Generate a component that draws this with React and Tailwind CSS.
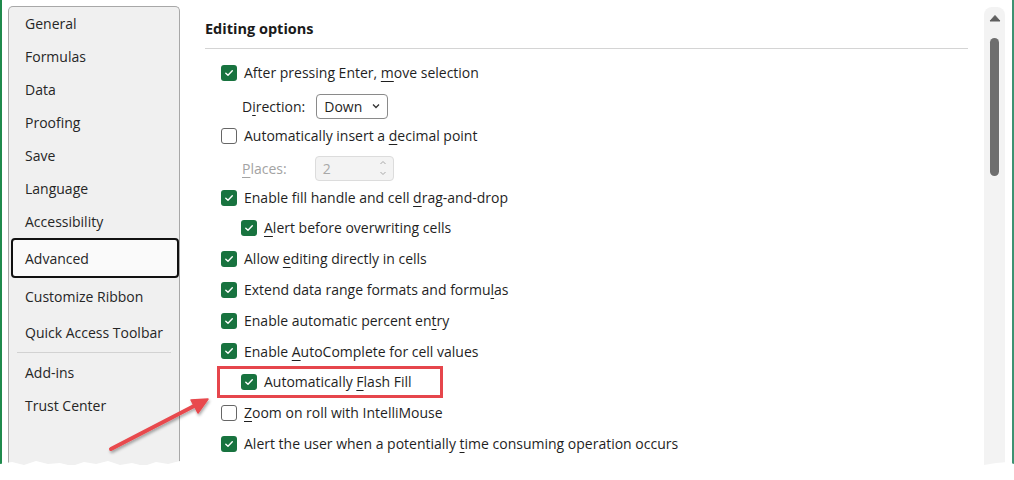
import React from "react";

const font = { fontFamily: '"Open Sans", "Noto Sans", sans-serif' };

function Check({ checked }) {
  if (checked) {
    return (
      <span className="w-[16px] h-[16px] rounded-[3px] bg-[#18733f] flex items-center justify-center shrink-0">
        <svg width="10" height="10" viewBox="0 0 10 10">
          <path d="M1.8 5.2 L4 7.3 L8.3 2.8" fill="none" stroke="white" strokeWidth="1.4" strokeLinecap="round" strokeLinejoin="round" />
        </svg>
      </span>
    );
  }
  return <span className="w-[16px] h-[16px] rounded-[3px] border border-[#666666] bg-white shrink-0" />;
}

function Row({ h, checked, sub, children, highlight }) {
  return (
    <div className={`relative flex items-center ${h} ${sub ? "pl-[36px]" : "pl-[16px]"} gap-[7px]`}>
      {highlight && (
        <div className="absolute left-[12px] top-0 w-[226px] h-[32px] border-[3px] border-[#e6464c]" />
      )}
      <Check checked={checked} />
      <span className="text-[14px] text-[#1f1f1f] whitespace-nowrap">{children}</span>
    </div>
  );
}

const U = ({ children }) => <u className="underline underline-offset-[3px] decoration-1">{children}</u>;

function NavItem({ children, h = "h-[33px]" }) {
  return (
    <div className={`${h} flex items-center pl-[16px] text-[14px] text-[#262626]`}>{children}</div>
  );
}

export default function App() {
  return (
    <div className="relative w-[1014px] h-[480px] bg-white overflow-hidden" style={font}>
      <div className="flex h-[465px]">
        <div className="w-[2px] bg-[#1f8a4c] shrink-0" />
        {/* nav */}
        <div className="pl-[6px] pt-[6px] shrink-0">
          <div className="w-[172px] h-[459px] bg-[#f0f0f0] border border-[#a8a8a8] border-b-0 rounded-t-[5px]">
            <NavItem>General</NavItem>
            <NavItem>Formulas</NavItem>
            <NavItem>Data</NavItem>
            <NavItem>Proofing</NavItem>
            <NavItem>Save</NavItem>
            <NavItem>Language</NavItem>
            <NavItem>Accessibility</NavItem>
            <div className="ml-[2px] h-[40px] border-2 border-[#111] rounded-[4px] bg-[#fafafa] flex items-center pl-[12px] text-[14px] text-[#262626]">
              Advanced
            </div>
            <NavItem h="h-[36px]">Customize Ribbon</NavItem>
            <NavItem h="h-[36px]">Quick Access Toolbar</NavItem>
            <div className="mx-[8px] h-px bg-[#d2d2d2] my-[2px]" />
            <NavItem h="h-[34px]">Add-ins</NavItem>
            <NavItem>Trust Center</NavItem>
          </div>
        </div>
        {/* content */}
        <div className="flex-1 pl-[25px] pr-[16px]">
          <div className="h-[49px] pt-[19px] text-[14.5px] font-bold text-[#1a1a1a] border-b border-[#d4d4d4] leading-[20px]">
            Editing options
          </div>
          <div className="pt-[8px]">
            <Row h="h-[31px]" checked>After pressing Enter, <U>m</U>ove selection</Row>
            <div className="h-[33px] pt-[3px] flex items-center pl-[37px] gap-[11px]">
              <span className="text-[14px] text-[#1f1f1f]">D<U>i</U>rection:</span>
              <div className="w-[72px] h-[25px] border border-[#8a8a8a] rounded-[4px] flex items-center justify-between pl-[7px] pr-[7px]">
                <span className="text-[14px] text-[#1f1f1f]">Down</span>
                <svg width="8" height="6" viewBox="0 0 8 6">
                  <path d="M1 1.5 L4 4.5 L7 1.5" fill="none" stroke="#333" strokeWidth="1.3" />
                </svg>
              </div>
            </div>
            <Row h="h-[29px]">Automatically insert a <U>d</U>ecimal point</Row>
            <div className="h-[33px] pt-[3px] flex items-center pl-[37px] gap-[28px]">
              <span className="text-[14px] text-[#a3a3a3]"><U>P</U>laces:</span>
              <div className="w-[79px] h-[25px] border border-[#dcdcdc] bg-[#f3f3f3] rounded-[4px] flex items-center justify-between pl-[7px] pr-[6px]">
                <span className="text-[14px] text-[#a8a8a8]">2</span>
                <svg width="8" height="18" viewBox="0 0 8 18">
                  <path d="M1.5 5 L4 2.5 L6.5 5" fill="none" stroke="#a8a8a8" strokeWidth="1" />
                  <path d="M1.5 13 L4 15.5 L6.5 13" fill="none" stroke="#a8a8a8" strokeWidth="1" />
                </svg>
              </div>
            </div>
            <Row h="h-[29px]" checked>Enable fill handle and cell <U>d</U>rag-and-drop</Row>
            <Row h="h-[31px]" checked sub><U>A</U>lert before overwriting cells</Row>
            <Row h="h-[31px]" checked>Allow <U>e</U>diting directly in cells</Row>
            <Row h="h-[31px]" checked>Extend data range formats and formu<U>l</U>as</Row>
            <Row h="h-[31px]" checked>Enable automatic percent en<U>t</U>ry</Row>
            <Row h="h-[30px]" checked>Enable <U>A</U>utoComplete for cell values</Row>
            <Row h="h-[31px]" checked sub highlight>Automatically <U>F</U>lash Fill</Row>
            <Row h="h-[31px]"><U>Z</U>oom on roll with IntelliMouse</Row>
            <Row h="h-[31px]" checked>Alert the user when a potentially <U>t</U>ime consuming operation occurs</Row>
          </div>
        </div>
        {/* scrollbar */}
        <div className="w-[21px] mt-[7px] bg-[#f3f3f3] rounded-t-[8px] flex flex-col items-center shrink-0">
          <svg width="12" height="8" viewBox="0 0 12 8" className="mt-[7px]">
            <path d="M1 7 L6 1.5 L11 7 Z" fill="#5f5f5f" stroke="#5f5f5f" strokeWidth="1" strokeLinejoin="round" />
          </svg>
          <div className="w-[9px] h-[138px] mt-[16px] rounded-full bg-[#6e6e6e]" />
        </div>
        <div className="w-[7px] shrink-0" />
        <div className="w-[2px] bg-[#3d9272] shrink-0" />
      </div>

      {/* red annotation arrow */}
      <svg className="absolute left-0 top-0 pointer-events-none" width="1014" height="480">
        <defs>
          <filter id="sh" x="-20%" y="-20%" width="140%" height="140%">
            <feDropShadow dx="1" dy="2" stdDeviation="1.5" floodColor="#000" floodOpacity="0.35" />
          </filter>
        </defs>
        <g filter="url(#sh)">
          <line x1="111" y1="449" x2="196" y2="405" stroke="#e8494d" strokeWidth="4" strokeLinecap="round" />
          <path d="M208 399 L191 400 L198 413 Z" fill="#e8494d" stroke="#e8494d" strokeWidth="1.5" strokeLinejoin="round" />
        </g>
      </svg>

      {/* torn paper edge */}
      <svg className="absolute left-0 bottom-0 pointer-events-none" width="1014" height="22" viewBox="0 0 1014 22" preserveAspectRatio="none">
        <path
          d="M0 6 L12 4 L24 7 L36 3 L48 6 L60 5 L72 8 L84 4 L96 6 L108 3 L120 7 L132 5 L144 8 L156 4 L168 6 L180 3 L192 7 L204 5 L216 4 L228 7 L240 3 L252 6 L264 5 L276 8 L288 4 L300 6 L312 3 L324 7 L336 5 L348 4 L360 7 L372 3 L384 6 L396 5 L408 8 L420 4 L432 6 L444 3 L456 7 L468 5 L480 4 L492 7 L504 3 L516 6 L528 5 L540 8 L552 4 L564 6 L576 3 L588 7 L600 5 L612 4 L624 7 L636 3 L648 6 L660 5 L672 8 L684 4 L696 6 L708 3 L720 7 L732 5 L744 4 L756 7 L768 3 L780 6 L792 5 L804 8 L816 4 L828 6 L840 3 L852 7 L864 5 L876 4 L888 7 L900 3 L912 6 L924 5 L936 8 L948 4 L960 6 L972 3 L984 7 L996 5 L1008 4 L1014 6 L1014 22 L0 22 Z"
          fill="#ffffff"
        />
      </svg>
    </div>
  );
}
